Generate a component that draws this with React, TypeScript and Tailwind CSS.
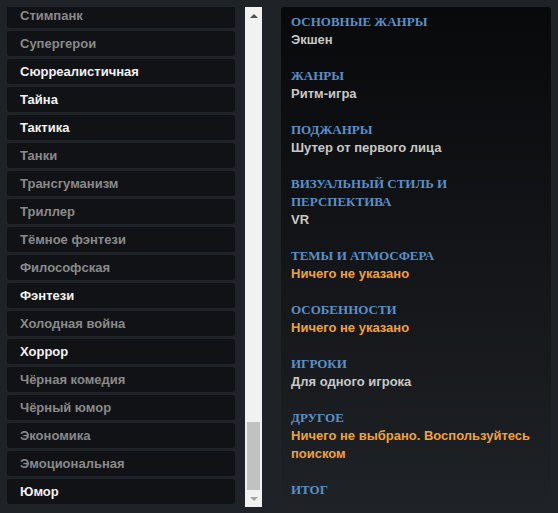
const tags = [
  { name: "Стимпанк", on: false },
  { name: "Супергерои", on: false },
  { name: "Сюрреалистичная", on: true },
  { name: "Тайна", on: true },
  { name: "Тактика", on: true },
  { name: "Танки", on: false },
  { name: "Трансгуманизм", on: false },
  { name: "Триллер", on: false },
  { name: "Тёмное фэнтези", on: false },
  { name: "Философская", on: false },
  { name: "Фэнтези", on: true },
  { name: "Холодная война", on: false },
  { name: "Хоррор", on: true },
  { name: "Чёрная комедия", on: false },
  { name: "Чёрный юмор", on: false },
  { name: "Экономика", on: false },
  { name: "Эмоциональная", on: false },
  { name: "Юмор", on: true },
];

const sections = [
  { title: "Основные жанры", value: "Экшен" },
  { title: "Жанры", value: "Ритм-игра" },
  { title: "Поджанры", value: "Шутер от первого лица" },
  { title: "Визуальный стиль и перспектива", value: "VR" },
  { title: "Темы и атмосфера", value: "Ничего не указано", empty: true },
  { title: "Особенности", value: "Ничего не указано", empty: true },
  { title: "Игроки", value: "Для одного игрока" },
  { title: "Другое", value: "Ничего не выбрано. Воспользуйтесь поиском", empty: true },
  { title: "Итог" },
];

const Scrollbar = () => (
  <div className="w-[17px] shrink-0 bg-[#f1f1f1] flex flex-col items-center">
    <div className="h-[17px] w-full flex items-center justify-center">
      <div className="w-0 h-0 border-l-[4px] border-r-[4px] border-b-[4px] border-l-transparent border-r-transparent border-b-[#505050]" />
    </div>
    <div className="flex-1" />
    <div className="h-[68px] w-[13px] bg-[#c1c1c1]" />
    <div className="h-[17px] w-full flex items-center justify-center">
      <div className="w-0 h-0 border-l-[4px] border-r-[4px] border-t-[4px] border-l-transparent border-r-transparent border-t-[#a3a3a3]" />
    </div>
  </div>
);

export default function App() {
  return (
    <div className="w-[558px] h-[513px] bg-[#1f2226] flex pt-[7px] pl-[7px] overflow-hidden font-['Liberation_Sans',Arial,sans-serif]">
      {/* tag list */}
      <div className="flex h-[500px] shrink-0">
        <div className="w-[228px] overflow-hidden">
          <div className="flex flex-col gap-[3px] -mt-[4px]">
            {tags.map((t) => (
              <div
                key={t.name}
                className={`h-[25px] shrink-0 rounded-[3px] bg-[#111215] pl-[13px] flex items-center text-[13px] font-bold ${
                  t.on ? "text-[#f2f2f2]" : "text-[#8a8a8a]"
                }`}
              >
                {t.name}
              </div>
            ))}
          </div>
        </div>
        <div className="w-[10px]" />
        <Scrollbar />
      </div>

      {/* summary */}
      <div className="ml-[19px] w-[270px] h-[506px] rounded-t-[3px] bg-gradient-to-b from-[#08090b] to-[#1f2226] px-[10px] pt-[6px]">
        <div className="flex flex-col gap-[18px]">
          {sections.map((s) => (
            <div key={s.title} className="text-[13px] leading-[18px]">
              <div className="uppercase font-bold text-[#5a90c8] font-['Liberation_Serif','Times_New_Roman',serif]">
                {s.title}
              </div>
              {s.value && (
                <div className={`font-bold ${s.empty ? "text-[#f0a23a]" : "text-[#c8c8c8]"}`}>{s.value}</div>
              )}
            </div>
          ))}
        </div>
      </div>
    </div>
  );
}
